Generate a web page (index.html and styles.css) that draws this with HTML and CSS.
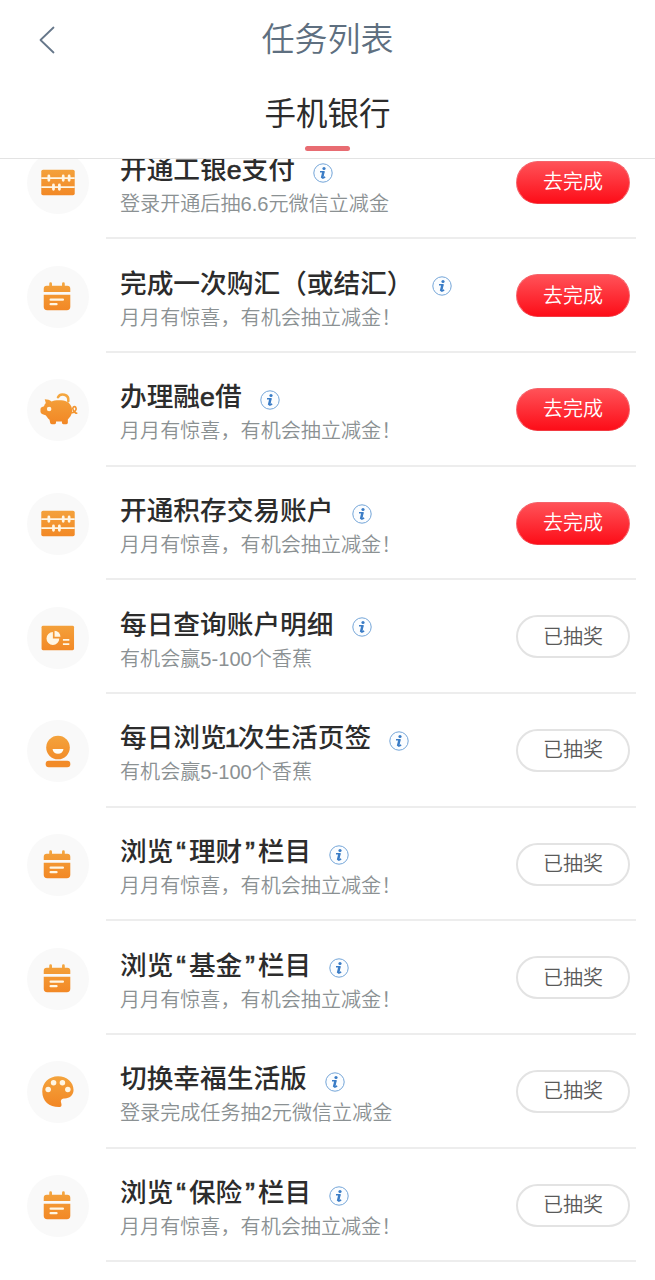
FILE: index.html
```html
<!DOCTYPE html>
<html lang="zh-CN">
<head>
    <meta charset="UTF-8">
    <meta name="viewport" content="width=device-width, initial-scale=1.0">
    <title>任务列表</title>
    <link rel="stylesheet" href="styles.css">
</head>
<body>

    <!-- shared icons -->
    <svg class="sprite" width="0" height="0">
        <defs>
            <linearGradient id="orange" x1="0" y1="12" x2="0" y2="48" gradientUnits="userSpaceOnUse">
                <stop offset="0" stop-color="#f4a63f"/>
                <stop offset="1" stop-color="#f28422"/>
            </linearGradient>
        </defs>
        <symbol id="abacus" viewBox="0 0 62 62">
            <rect x="14" y="17" width="34" height="26" rx="1.800" fill="url(#orange)"/>
            <path d="M14 25.500h34M14 34.700h34" stroke="#fff6e4" stroke-width="1.900"/>
            <path d="M21.700 23.300v4.400M36.300 23.300v4.400M42.300 23.300v4.400M26.400 32.500v4.400M32.400 32.500v4.400" stroke="#fff6e4" stroke-width="2.800" stroke-linecap="round"/>
        </symbol>
        <symbol id="calendar" viewBox="0 0 62 62">
            <path d="M23.500 17v4M36.500 17v4" stroke="#f4a63f" stroke-width="2.800" stroke-linecap="round"/>
            <path d="M16.500 25.300V22a3 3 0 0 1 3-3h21a3 3 0 0 1 3 3v3.300zM16.500 28.200h27v12.300a3.500 3.500 0 0 1-3.500 3.500h-20a3.500 3.500 0 0 1-3.500-3.500z" fill="url(#orange)"/>
            <path d="M23.500 33.200h12.500M23.500 37.800h6" stroke="#fff6e4" stroke-width="2.300" stroke-linecap="round"/>
        </symbol>
        <symbol id="piggy" viewBox="0 0 62 62">
            <path d="M31 17.500c2.500-4.800 11.500-3.200 10.500 4" fill="none" stroke="#f4a63f" stroke-width="2.600" stroke-linecap="round"/>
            <path d="M17.500 19.500c3 0 5 .8 7 2.300 3-1.500 12-1.700 15.500.3 4 2 5.800 6 5.300 10-.4 4-2.300 6-4.300 8v3.400q0 1.500-1.500 1.500h-3q-1.500 0-1.500-1.500v-1.300h-6v1.300q0 1.500-1.500 1.500h-2.800q-1.500 0-1.700-1.500l-.6-3c-1.700-1-2.800-3.400-4-4.600l-3-1.200q-2.200-.8-2.200-2.500v-2.800q0-1.500 1.600-2l2-.8c.5-1.500 1-2.500 1.800-3.300z" fill="url(#orange)"/>
            <circle cx="22" cy="29.500" r="2.300" fill="#fff6e4"/>
            <path d="M44 33c4 1 6.500-3 5-5.300-1.500-1.700-4 .3-2.500 3s3 3.300 3.500 3" fill="none" stroke="#f39530" stroke-width="1.700" stroke-linecap="round"/>
        </symbol>
        <symbol id="chart" viewBox="0 0 62 62">
            <rect x="14.300" y="18" width="33" height="25" rx="1.500" fill="url(#orange)"/>
            <path d="M25.800 24.500v6.500h6.500a6.500 6.500 0 1 1-6.500-6.500z" fill="#fff6e4"/>
            <path d="M27.500 23.200a6 6 0 0 1 6 6h-6z" fill="#fff6e4"/>
            <path d="M36 32.500h6.500M36 36.800h6.500" stroke="#fff6e4" stroke-width="1.800"/>
        </symbol>
        <symbol id="smile" viewBox="0 0 62 62">
            <circle cx="31" cy="27" r="12" fill="url(#orange)"/>
            <path d="M25.500 28.500h11a5.500 4.900 0 0 1-11 0z" fill="#fffdf6"/>
            <rect x="18.500" y="40.500" width="25" height="6.500" rx="3" fill="#f28b28"/>
        </symbol>
        <symbol id="palette" viewBox="0 0 62 62">
            <path d="M31 14.500c9 0 15.800 6 15.800 14 0 5.500-4.300 8.500-8.800 8.500-3 0-4.800 1.400-3.800 4.300.8 2.700.5 4.500-2.200 4.500C22 45.800 15 40 15 30c0-9 7-15.500 16-15.500z" fill="url(#orange)"/>
            <g fill="#fff6e4">
                <circle cx="21" cy="28" r="2.800"/>
                <circle cx="26.500" cy="21" r="2.800"/>
                <circle cx="35.500" cy="21" r="2.800"/>
                <circle cx="41" cy="28" r="2.800"/>
            </g>
        </symbol>
        <symbol id="info" viewBox="0 0 20 20">
            <circle cx="10" cy="10" r="9.200" fill="#fbfdff" stroke="#74a5d8" stroke-width="1"/>
            <circle cx="11" cy="5.500" r="1.600" fill="#3a7cc6"/>
            <path d="M7 8.700h3.600l-1.300 5.600q-.1.900.7.700l2.200-1" fill="none" stroke="#3a7cc6" stroke-width="1.500"/>
            <path d="M10.600 8.200L9 15" stroke="#3a7cc6" stroke-width="2.400"/>
        </symbol>
    </svg>

    <header class="header">
        <div class="navbar">
            <svg class="back" viewBox="0 0 16 28"><path d="M14.500 1.500L1.500 14l13 12.500"/></svg>
            <h1>任务列表</h1>
        </div>
        <div class="tab">手机银行</div>
    </header>

    <main class="scroller">
        <ul class="tasks">
            <li class="task">
                <span class="icon"><svg><use href="#abacus"/></svg></span>
                <div class="content">
                    <div class="text">
                        <h2>开通工银<span class="latin">e</span>支付<svg class="info"><use href="#info"/></svg></h2>
                        <p>登录开通后抽6.6元微信立减金</p>
                    </div>
                    <button class="btn go">去完成</button>
                </div>
            </li>
            <li class="task">
                <span class="icon"><svg><use href="#calendar"/></svg></span>
                <div class="content">
                    <div class="text">
                        <h2>完成一次购汇（或结汇）<svg class="info"><use href="#info"/></svg></h2>
                        <p>月月有惊喜，有机会抽立减金！</p>
                    </div>
                    <button class="btn go">去完成</button>
                </div>
            </li>
            <li class="task">
                <span class="icon"><svg><use href="#piggy"/></svg></span>
                <div class="content">
                    <div class="text">
                        <h2>办理融<span class="latin">e</span>借<svg class="info"><use href="#info"/></svg></h2>
                        <p>月月有惊喜，有机会抽立减金！</p>
                    </div>
                    <button class="btn go">去完成</button>
                </div>
            </li>
            <li class="task">
                <span class="icon"><svg><use href="#abacus"/></svg></span>
                <div class="content">
                    <div class="text">
                        <h2>开通积存交易账户<svg class="info"><use href="#info"/></svg></h2>
                        <p>月月有惊喜，有机会抽立减金！</p>
                    </div>
                    <button class="btn go">去完成</button>
                </div>
            </li>
            <li class="task">
                <span class="icon"><svg><use href="#chart"/></svg></span>
                <div class="content">
                    <div class="text">
                        <h2>每日查询账户明细<svg class="info"><use href="#info"/></svg></h2>
                        <p>有机会赢5-100个香蕉</p>
                    </div>
                    <button class="btn done">已抽奖</button>
                </div>
            </li>
            <li class="task">
                <span class="icon"><svg><use href="#smile"/></svg></span>
                <div class="content">
                    <div class="text">
                        <h2>每日浏览<span class="latin digit">1</span>次生活页签<svg class="info"><use href="#info"/></svg></h2>
                        <p>有机会赢5-100个香蕉</p>
                    </div>
                    <button class="btn done">已抽奖</button>
                </div>
            </li>
            <li class="task">
                <span class="icon"><svg><use href="#calendar"/></svg></span>
                <div class="content">
                    <div class="text">
                        <h2>浏览<span class="quote">“</span>理财<span class="quote">”</span>栏目<svg class="info"><use href="#info"/></svg></h2>
                        <p>月月有惊喜，有机会抽立减金！</p>
                    </div>
                    <button class="btn done">已抽奖</button>
                </div>
            </li>
            <li class="task">
                <span class="icon"><svg><use href="#calendar"/></svg></span>
                <div class="content">
                    <div class="text">
                        <h2>浏览<span class="quote">“</span>基金<span class="quote">”</span>栏目<svg class="info"><use href="#info"/></svg></h2>
                        <p>月月有惊喜，有机会抽立减金！</p>
                    </div>
                    <button class="btn done">已抽奖</button>
                </div>
            </li>
            <li class="task">
                <span class="icon"><svg><use href="#palette"/></svg></span>
                <div class="content">
                    <div class="text">
                        <h2>切换幸福生活版<svg class="info"><use href="#info"/></svg></h2>
                        <p>登录完成任务抽2元微信立减金</p>
                    </div>
                    <button class="btn done">已抽奖</button>
                </div>
            </li>
            <li class="task">
                <span class="icon"><svg><use href="#calendar"/></svg></span>
                <div class="content">
                    <div class="text">
                        <h2>浏览<span class="quote">“</span>保险<span class="quote">”</span>栏目<svg class="info"><use href="#info"/></svg></h2>
                        <p>月月有惊喜，有机会抽立减金！</p>
                    </div>
                    <button class="btn done">已抽奖</button>
                </div>
            </li>
        </ul>
    </main>

</body>
</html>
```

FILE: styles.css
```css
* {
    box-sizing: border-box;
}

body {
    margin: 0;
    height: 100vh;
    display: flex;
    flex-direction: column;
    overflow: hidden;
    background-color: #fff;
    color: #2c2c2c;
    font-family: "Liberation Sans", "Noto Sans CJK SC", sans-serif;
}

h1, h2, p, ul {
    margin: 0;
    padding: 0;
    font-weight: normal;
}

.sprite {
    display: block;
}

.header {
    height: 159px;
    flex: none;
    border-bottom: 1px solid #e3e3e3;
}

.navbar {
    height: 80px;
    display: grid;
    grid-template-columns: 95px 1fr 95px;
    align-items: center;
}

.back {
    width: 16px;
    height: 28px;
    margin-left: 39px;
    fill: none;
    stroke: #66778a;
    stroke-width: 1.8;
    stroke-linecap: round;
    stroke-linejoin: round;
}

.navbar h1 {
    font-size: 33px;
    line-height: 48px;
    font-weight: 350;
    text-align: center;
    color: #5e6f80;
}

.tab {
    height: 77px;
    padding-top: 10px;
    display: flex;
    flex-direction: column;
    align-items: center;
    font-size: 31.5px;
    line-height: 48px;
}

/* underline of the active tab */
.tab::after {
    content: "";
    width: 45px;
    height: 5px;
    margin-top: 8px;
    border-radius: 3px;
    background-color: #e86c72;
}

.scroller {
    flex: 1;
    min-height: 0;
    overflow: hidden;
}

.tasks {
    list-style: none;
    margin-top: -33.2px;
}

.task {
    height: 113.67px;
    display: flex;
    align-items: center;
    padding: 0 19px 0 27px;
}

.icon {
    width: 62px;
    height: 62px;
    flex: none;
    margin-right: 17px;
    margin-top: 1px;
    border-radius: 50%;
    background-color: #f9f9f9;
}

.icon svg {
    display: block;
    width: 62px;
    height: 62px;
    padding-top: 1px;
}

.content {
    flex: 1;
    height: 100%;
    display: flex;
    align-items: center;
    justify-content: space-between;
    padding: 1px 6px 0 14px;
    border-bottom: 2px solid #ededed;
}

.text {
    padding-top: 6px;
    white-space: nowrap;
}

.text h2 {
    display: flex;
    align-items: center;
    font-size: 26.7px;
    line-height: 36px;
    font-weight: 500;
}

.latin {
    -webkit-text-stroke: 0.7px #2c2c2c;
}

.digit {
    width: 11px;
    text-indent: -2px;
}

.quote {
    width: 15.5px;
    text-align: center;
    font-size: 29px;
    -webkit-text-stroke: 0.6px #2c2c2c;
}

.text p {
    font-size: 20.1px;
    line-height: 28px;
    margin-top: 2px;
    font-weight: 350;
    color: #8b9193;
}

.info {
    width: 20px;
    height: 20px;
    margin: 5px 0 0 18px;
}

.btn {
    width: 114px;
    height: 43px;
    padding: 0;
    border-radius: 22px;
    font-family: inherit;
    font-size: 20px;
    line-height: 28px;
    font-weight: 350;
}

.go {
    border: 1px solid #f5636a;
    border-bottom-color: #f23a42;
    background: linear-gradient(#ff5258, #fd0d18);
    color: #fff;
}

.done {
    border: 2px solid #e3e3e3;
    background-color: #fff;
    color: #5a5a5a;
}
```
